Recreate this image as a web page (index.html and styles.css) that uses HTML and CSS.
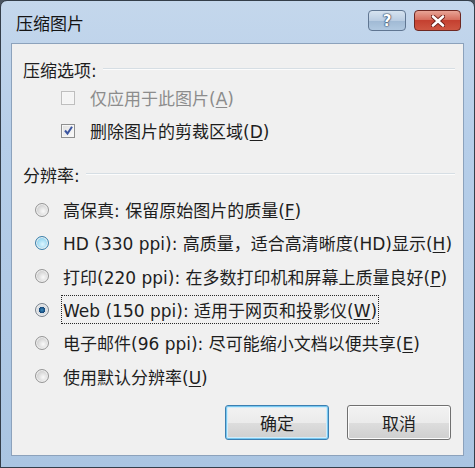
FILE: index.html
```html
<!DOCTYPE html>
<html>
    <head>
        <meta charset="utf-8">
        <title>压缩图片</title>
        <link rel="stylesheet" href="styles.css">
    </head>
    <body>
        <div class="window">
            <div class="titlebar">
                <span class="title">压缩图片</span>
                <div class="caption-buttons">
                    <div class="cap-btn help">?</div>
                    <div class="cap-btn close">
                        <svg width="14" height="12" viewBox="0 0 14 12">
                            <path d="M2 1.5 L12 10.5 M12 1.5 L2 10.5" stroke="#6d1f18" stroke-width="4.4" stroke-linecap="round"/>
                            <path d="M2 1.5 L12 10.5 M12 1.5 L2 10.5" stroke="#ffffff" stroke-width="2.6" stroke-linecap="round"/>
                        </svg>
                    </div>
                </div>
            </div>
            <div class="client">
                <div class="group-head"><span>压缩选项:</span><i class="rule"></i></div>
                <div class="check-row disabled">
                    <span class="checkbox"></span>
                    <span>仅应用于此图片(<u>A</u>)</span>
                </div>
                <div class="check-row">
                    <span class="checkbox checked">
                        <svg width="11" height="11" viewBox="0 0 11 11">
                            <path d="M2 5.5 L4.5 8.5 L9 1.8" fill="none" stroke="#3b55a0" stroke-width="2"/>
                        </svg>
                    </span>
                    <span>删除图片的剪裁区域(<u>D</u>)</span>
                </div>

                <div class="group-head second"><span>分辨率:</span><i class="rule"></i></div>
                <div class="radio-list">
                    <div class="radio-row"><span class="radio"></span><span>高保真: 保留原始图片的质量(<u>F</u>)</span></div>
                    <div class="radio-row"><span class="radio hover"></span><span>HD (330 ppi): 高质量，适合高清晰度(HD)显示(<u>H</u>)</span></div>
                    <div class="radio-row"><span class="radio"></span><span>打印(220 ppi): 在多数打印机和屏幕上质量良好(<u>P</u>)</span></div>
                    <div class="radio-row"><span class="radio selected"></span><span class="focus">Web (150 ppi): 适用于网页和投影仪(<u>W</u>)</span></div>
                    <div class="radio-row"><span class="radio"></span><span>电子邮件(96 ppi): 尽可能缩小文档以便共享(<u>E</u>)</span></div>
                    <div class="radio-row"><span class="radio"></span><span>使用默认分辨率(<u>U</u>)</span></div>
                </div>

                <div class="buttons">
                    <div class="btn default">确定</div>
                    <div class="btn">取消</div>
                </div>
            </div>
        </div>
    </body>
</html>
```

FILE: styles.css
```css
body {
    margin: 0;
    background-color: rgb(74, 84, 96);
    font-family: "DejaVu Sans", "Noto Sans CJK SC", sans-serif;
    font-size: 17px;
    color: rgb(30, 30, 30);
}
.window {
    width: 475px;
    height: 468px;
    box-sizing: border-box;
    border: 1px solid rgb(52, 62, 74);
    border-radius: 7px 7px 0 0;
    background: linear-gradient(rgb(196, 215, 236), rgb(182, 206, 233) 30%, rgb(170, 197, 226));
    padding: 0 10px 11px 10px;
    display: flex;
    flex-direction: column;
}
.titlebar {
    height: 42px;
    display: flex;
    align-items: center;
    justify-content: space-between;
}
.title {
    padding-left: 5px;
    font-family: "Noto Sans CJK SC", sans-serif;
    font-size: 17px;
    color: rgb(20, 20, 20);
}
.caption-buttons {
    display: flex;
    gap: 8px;
    margin-top: -3px;
    margin-right: 3px;
}
.cap-btn {
    height: 21px;
    border-radius: 4px;
    display: flex;
    align-items: center;
    justify-content: center;
    box-sizing: border-box;
}
.help {
    width: 38px;
    border: 1px solid rgb(96, 118, 146);
    background: linear-gradient(rgb(214, 227, 240), rgb(186, 205, 226) 50%, rgb(160, 185, 212) 51%, rgb(176, 200, 224));
    color: white;
    font-family: "DejaVu Sans", sans-serif;
    font-weight: bold;
    font-size: 15px;
    text-shadow: 0 0 1px rgb(40, 60, 90), 0 0 1px rgb(40, 60, 90), 0 0 2px rgb(40, 60, 90);
}
.close {
    width: 47px;
    border: 1px solid rgb(110, 40, 34);
    background: linear-gradient(rgb(232, 164, 150), rgb(214, 112, 96) 45%, rgb(196, 64, 48) 50%, rgb(206, 86, 66));
}
.client {
    flex: 1;
    background-color: rgb(240, 240, 240);
    border: 1px solid rgb(140, 162, 188);
    padding: 13px 8px 0 11px;
}
.group-head {
    height: 24px;
    display: flex;
    align-items: center;
    gap: 6px;
}
.group-head.second {
    margin-top: 15px;
}
.rule {
    flex: 1;
    height: 1px;
    background-color: rgb(214, 222, 228);
    border-bottom: 1px solid rgb(252, 252, 252);
}
.check-row {
    height: 33px;
    display: flex;
    align-items: center;
    padding-left: 38px;
    gap: 15px;
}
.check-row.disabled {
    color: rgb(140, 140, 140);
}
.checkbox {
    width: 14px;
    height: 14px;
    box-sizing: border-box;
    border: 1px solid rgb(142, 143, 143);
    background: linear-gradient(135deg, rgb(222, 222, 222), rgb(252, 252, 252));
    box-shadow: inset 0 0 0 1px rgb(246, 246, 246);
    display: flex;
    align-items: center;
    justify-content: center;
}
.check-row.disabled .checkbox {
    border-color: rgb(190, 190, 190);
    background: rgb(244, 244, 244);
}
.radio-list {
    margin-top: 7px;
}
.radio-row {
    height: 33.3px;
    display: flex;
    align-items: center;
    padding-left: 12px;
    gap: 14px;
}
.radio {
    width: 14px;
    height: 14px;
    box-sizing: border-box;
    border-radius: 50%;
    border: 1px solid rgb(150, 150, 150);
    background: radial-gradient(circle at 60% 60%, rgb(250, 250, 250), rgb(214, 214, 214) 55%, rgb(200, 200, 200));
    box-shadow: inset 0 0 0 1px rgb(240, 240, 240);
}
.radio.hover {
    border-color: rgb(60, 128, 170);
    background: radial-gradient(circle at 55% 60%, rgb(220, 245, 255), rgb(150, 214, 240) 60%, rgb(120, 190, 226));
}
.radio.selected {
    border-color: rgb(120, 130, 140);
    background: radial-gradient(circle, rgb(60, 140, 190) 0, rgb(20, 70, 120) 35%, rgb(220, 224, 228) 40%, rgb(200, 204, 210));
}
.focus {
    outline: 1px dotted rgb(40, 40, 40);
    outline-offset: 1px;
}
u {
    text-decoration-thickness: 1px;
    text-underline-offset: 2px;
}
.buttons {
    margin-top: 12px;
    display: flex;
    justify-content: flex-end;
    gap: 18px;
    padding-right: 4px;
}
.btn {
    width: 104px;
    height: 35px;
    box-sizing: border-box;
    border: 1px solid rgb(112, 112, 112);
    border-radius: 3px;
    background: linear-gradient(rgb(242, 242, 242), rgb(235, 235, 235) 50%, rgb(221, 221, 221) 51%, rgb(207, 207, 207));
    box-shadow: inset 0 0 0 1px rgb(252, 252, 252);
    font-family: "Noto Sans CJK SC", sans-serif;
    display: flex;
    align-items: center;
    justify-content: center;
}
.btn.default {
    border-color: rgb(60, 127, 177);
    box-shadow: inset 0 0 0 1px rgb(120, 200, 240), inset 0 0 0 2px rgb(210, 236, 250);
}
```
